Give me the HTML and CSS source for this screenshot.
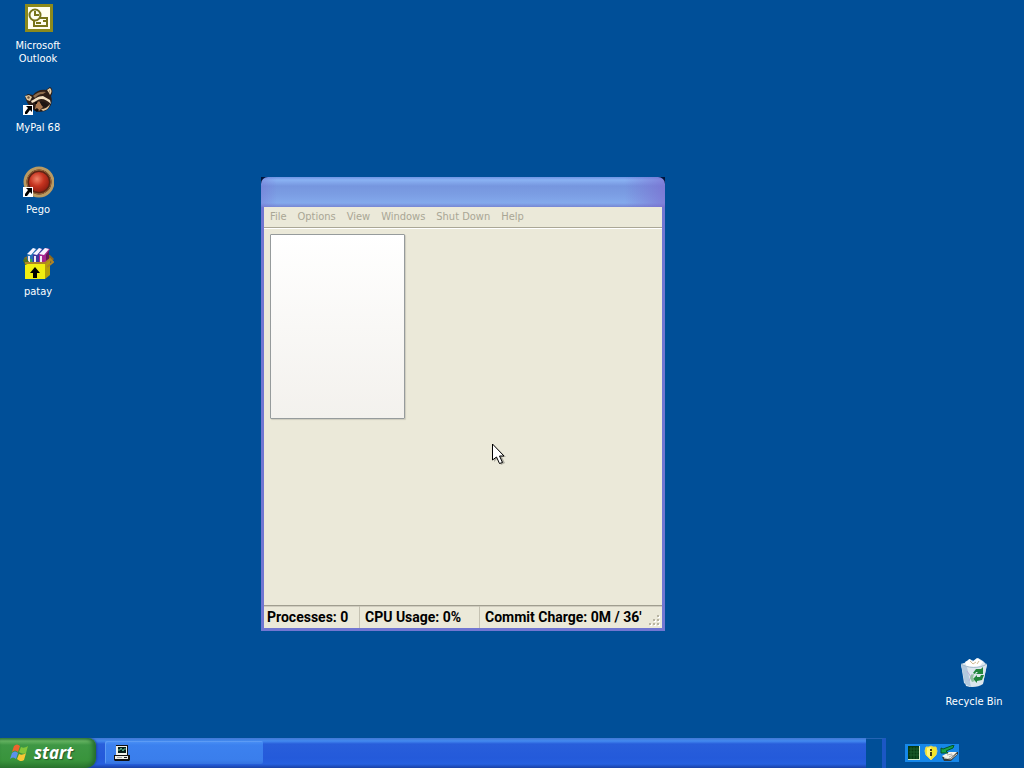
FILE: index.html
```html
<!DOCTYPE html>
<html lang="en">
  <head>
    <meta charset="UTF-8" />
    <title>Desktop</title>
    <link rel="stylesheet" href="styles.css">
  </head>
  <body>
    <main class="desktop">
      <nav class="icons">
        <a class="icon" href="#outlook">
          <svg width="32" height="32" viewBox="0 0 32 32">
            <rect x="3" y="2" width="28" height="28" fill="#fffff0"/>
            <rect x="4.500" y="3.500" width="25" height="25" fill="#fffff0" stroke="#8c8a1c" stroke-width="3"/>
            <rect x="12" y="16" width="13" height="8" fill="#fffff0" stroke="#77751a" stroke-width="2"/>
            <path d="M14 21h5M21 19h3" stroke="#77751a" stroke-width="2"/>
            <circle cx="13" cy="13" r="5.500" fill="#fffff0" stroke="#77751a" stroke-width="2"/>
            <path d="M13 9v4h4" fill="none" stroke="#77751a" stroke-width="2"/>
          </svg>
          <span>Microsoft Outlook</span>
        </a>
        <a class="icon" href="#mypal">
          <svg width="32" height="32" viewBox="0 0 32 32">
            <path d="M3 12l3-2 5 1c3-4 8-6 13-5l4-3c3 2 3 6 1 9 2 6 0 12-6 15-6 2-12 0-14-4-3-2-5-6-6-11z" fill="#2c1e18"/>
            <path d="M3 12l4-1 3 2-2 4-3-1z" fill="#dfc9a0"/>
            <path d="M5 13l2-1 1 2-2 1z" fill="#6e5640"/>
            <path d="M25 6l3-2c2 2 2 4 0 7l-1-2z" fill="#e6cfa8"/>
            <path d="M27 6l1 1v2z" fill="#654832"/>
            <path d="M11 12c4-4 9-5 13-4l-3 2c-4 0-6 2-8 4z" fill="#8c6c4e"/>
            <path d="M9 17c4-2 7-5 12-5l7 4 1 4c-3-3-6-5-10-5-3 0-6 3-9 4z" fill="#f0dfc3"/>
            <path d="M14 20l3-3 4 6-4 4-4-2z" fill="#a9774f"/>
            <path d="M18 18c4-1 7 1 9 4l-3 1-4-1z" fill="#1d1513"/>
            <path d="M19 25c4 0 7-2 9-5-1 4-3 6-7 7z" fill="#e0c59c"/>
            <path d="M12 26l3-2 2 2-2 2z" fill="#120e0d"/>
            <circle cx="14" cy="19" r="1" fill="#000"/>
            <rect x="1" y="21" width="10" height="10" fill="#fff"/>
            <path d="M4 22h6v6l-2-2-3 4H3v-2l3-4z" fill="#000"/>
          </svg>
          <span>MyPal 68</span>
        </a>
        <a class="icon" href="#pego">
          <svg width="32" height="32" viewBox="0 0 32 32">
            <defs>
              <radialGradient id="ball" cx="0.4" cy="0.35" r="0.7">
                <stop offset="0" stop-color="#f08468"/>
                <stop offset="0.5" stop-color="#c63420"/>
                <stop offset="1" stop-color="#8c1c10"/>
              </radialGradient>
            </defs>
            <circle cx="17" cy="16" r="14" fill="#5c2414" stroke="#b99a62" stroke-width="3"/>
            <circle cx="17" cy="16" r="12" fill="none" stroke="#94653a"/>
            <circle cx="17" cy="16" r="10" fill="url(#ball)"/>
            <rect x="1" y="21" width="10" height="10" fill="#fff"/>
            <path d="M4 22h6v6l-2-2-3 4H3v-2l3-4z" fill="#000"/>
          </svg>
          <span>Pego</span>
        </a>
        <a class="icon" href="#patay">
          <svg width="32" height="32" viewBox="0 0 32 32">
            <path d="M2 10l5-3h21l4 4-4 4H5z" fill="#8b681f"/>
            <path d="M5 7l6-7 4 1-4 7v6H5z" fill="#226eb2"/>
            <path d="M11 7l6-7 4 1-4 7v6h-6z" fill="#3c359e"/>
            <path d="M17 7l6-7 5 1-4 7v6h-7z" fill="#a6238f"/>
            <path d="M5 6l6-6 3 1-5 6zM11 6l6-6 3 1-5 6zM17 6l6-6 4 1-5 6z" fill="#f6f3ff"/>
            <path d="M7 8v6M13 8v6M19 8v6" stroke="#f0e8f2" stroke-width="2"/>
            <path d="M9 11v3" stroke="#3aa052" stroke-width="2"/>
            <path d="M24 7l3-4v9l-3 1z" fill="#651756"/>
            <path d="M3 14h20v17H3z" fill="#f2ee10"/>
            <path d="M23 15l5-4v16l-5 4z" fill="#b5a009"/>
            <path d="M1 12l3-2 4 5-5 2z" fill="#52731d"/>
            <path d="M3 15h20l5-4 3 3-6 5" fill="none" stroke="#af8425" stroke-width="2"/>
            <path d="M13 19l5 6h-3v5h-4v-5H8z" fill="#000"/>
          </svg>
          <span>patay</span>
        </a>
      </nav>

      <a class="icon recycle" href="#recycle">
        <svg width="32" height="32" viewBox="0 0 32 32">
          <path d="M3 6l6-2 2-3 5 2 4-3 5 3 4 4-4 18-13 4-6-4z" fill="#dce8f0"/>
          <path d="M3 6l22 3 4-3-4 20c-4 3-11 4-17 2z" fill="#dce6ed"/>
          <path d="M3 6l6 3 4 20-6-3z" fill="#b4c9dd"/>
          <path d="M7 4l5-3 2 3 5-4 6 4-4 5H9z" fill="#fff"/>
          <path d="M12 3l3 3 3-2M21 3l-2 3" fill="none" stroke="#d2bd96"/>
          <path d="M3 6c6 4 18 5 26 0" fill="none" stroke="#9db6ca"/>
          <path d="M9 13l4 6M11 23l3-7" stroke="#b9afd8"/>
          <path d="M15 15l3-4h5l2-2v7h-7l2-2h-2l-1 2zM26 17l-2 5-5 1v2l-4-4 4-4v2h3l1-2z" fill="#21853c"/>
          <path d="M13 17l3-1-1 4 2 3-3 1-2-4z" fill="#8fbf9e"/>
        </svg>
        <span>Recycle Bin</span>
      </a>

      <section class="window" aria-label="Task manager">
        <header class="title-bar"></header>
        <div class="window-body">
          <div class="menu">
            <button type="button" disabled>File</button>
            <button type="button" disabled>Options</button>
            <button type="button" disabled>View</button>
            <button type="button" disabled>Windows</button>
            <button type="button" disabled>Shut Down</button>
            <button type="button" disabled>Help</button>
          </div>
          <div class="content">
            <div class="panel"></div>
          </div>
          <footer class="status">
            <span class="processes">Processes: 0</span>
            <span class="cpu">CPU Usage: 0%</span>
            <span class="commit">Commit Charge: 0M / 36'</span>
            <svg class="grip" width="14" height="14" viewBox="0 0 14 14">
              <path d="M10 2h2v2h-2zM6 6h2v2H6zM10 6h2v2h-2zM2 10h2v2H2zM6 10h2v2H6zM10 10h2v2h-2z" fill="#fff"/>
              <path d="M9 1h2v2H9zM5 5h2v2H5zM9 5h2v2H9zM1 9h2v2H1zM5 9h2v2H5zM9 9h2v2H9z" fill="#b8b4a2"/>
            </svg>
          </footer>
        </div>
      </section>

      <svg class="cursor" width="16" height="24" viewBox="0 0 16 24">
        <path d="M3 3v16l4-4 3 7 4-2-3-6h4z" fill="#000" opacity="0.25"/>
        <path d="M1.500 1v16l4-3 3 6.500 3-1-3-6.500h4.500z" fill="#fff" stroke="#000"/>
      </svg>
    </main>

    <footer class="taskbar">
      <div class="bar">
        <button class="start" type="button">
          <svg width="20" height="20" viewBox="0 0 20 20">
            <path d="M4 3c2-2 4-2 6 0L8 9C6 7 4 7 2 9z" fill="#ed642d"/>
            <path d="M11 4c2 1 4 1 7-1l-2 7c-2 1-4 1-7-1z" fill="#83c63a"/>
            <path d="M2 10c2-2 4-2 6 0l-2 6c-2-2-4-2-6 0z" fill="#5b91ec"/>
            <path d="M9 11c2 1 4 1 7-1l-2 7c-2 2-5 1-7-1z" fill="#f8c735"/>
          </svg>
          <span>start</span>
        </button>
        <button class="task" type="button" aria-label="Task manager">
          <svg width="16" height="16" viewBox="0 0 16 16">
            <path d="M2 0h12v10h2v5l-1 1H1l-1-1v-5h2z" fill="#111"/>
            <path d="M2 1h11v9H2z" fill="#f0f0e8"/>
            <path d="M4 2h8v6H4z" fill="#061c16"/>
            <path d="M4 5h2l1-2 2 3 1-2h2" fill="none" stroke="#63ba93"/>
            <path d="M1 11h13v3H1z" fill="#f0f0e8"/>
            <path d="M3 12h5v1H3z" fill="#aaa"/>
            <path d="M10 12h3v1h-3z" fill="#222"/>
          </svg>
        </button>
      </div>
      <div class="edge"></div>
      <div class="tray">
        <svg width="16" height="16" viewBox="0 0 16 16">
          <path d="M2 1h12v14H2z" fill="#d6edc8"/>
          <path d="M2 1h11v13H2z" fill="#073b12"/>
          <path d="M3 4h10M3 7h10M3 10h10M5 2v12M8 2v12M11 2v12" stroke="#1b5c2a"/>
        </svg>
        <svg width="16" height="16" viewBox="0 0 16 16">
          <path d="M8 1l2 1h3l1 4-1 4-5 5-5-5-1-4 1-4h3z" fill="#f5e62b" stroke="#e3d45c"/>
          <path d="M4 3l4-1v12l-4-4z" fill="#fff679"/>
          <path d="M7 4h2v2H7zM7 7h2v4H7z" fill="#423d16"/>
        </svg>
        <svg width="18" height="16" viewBox="0 0 18 16">
          <path d="M2 12l7-5h9v2l-7 7H4z" fill="#343a3a"/>
          <path d="M2 11l7-4h8l-6 6H5z" fill="#f4f4ea"/>
          <path d="M4 13l7 1 6-5" fill="none" stroke="#d3d3c9"/>
          <path d="M7 10l5-1M9 12l4-2" stroke="#aaa"/>
          <path d="M1 3l2 1 8-3 3-1-1 3-7 3 2 2H1z" fill="#19a449" stroke="#075427"/>
        </svg>
      </div>
    </footer>
  </body>
</html>
```
FILE: styles.css
```css
* {
    box-sizing: border-box;
}

body {
    margin: 0;
    height: 100vh;
    display: flex;
    flex-direction: column;
    overflow: hidden;
    background-color: #004f98;
    font-family: "DejaVu Sans Condensed", "DejaVu Sans", sans-serif;
    font-size: 11px;
}

button {
    margin: 0;
    padding: 0;
    border: none;
    background: none;
    font-family: inherit;
    font-size: inherit;
}

svg {
    display: block;
    flex-shrink: 0;
}

/* desktop */
.desktop {
    flex: 1;
    position: relative;
    min-height: 0;
}

.icons {
    width: 76px;
    padding-top: 2px;
    display: grid;
    grid-auto-rows: 82px;
}

.icon {
    display: flex;
    flex-direction: column;
    align-items: center;
    gap: 5px;
    color: #fff;
    line-height: 13px;
    text-align: center;
    text-decoration: none;
}

.recycle {
    position: absolute;
    right: 12px;
    bottom: 30px;
    width: 76px;
}

/* window */
.window {
    position: absolute;
    left: 261px;
    top: 177px;
    width: 404px;
    height: 454px;
    display: flex;
    flex-direction: column;
    background-color: #00143c;
}

.title-bar {
    height: 30px;
    border-radius: 7px 7px 0 0;
    background: linear-gradient(to right, rgba(118, 113, 211, 0.4), transparent 16px, transparent 90%, rgba(124, 105, 206, 0.65)), linear-gradient(#6e94e4, #8ab2f3 3px, #7696df 9px, #7b9de3 17px, #83a9ec 26px, #7686d3);
}

.window-body {
    flex: 1;
    display: flex;
    flex-direction: column;
    border: solid #7176d2;
    border-width: 0 3px 3px;
    background-color: #ebe9d9;
}

.menu {
    height: 21px;
    padding-left: 6px;
    display: flex;
    gap: 11px;
    border-bottom: 1px solid #aaa796;
}

.menu button {
    height: 18px;
    color: #a9a695;
}

.content {
    flex: 1;
    padding: 5px 6px;
    border-top: 1px solid #fff;
}

.panel {
    width: 135px;
    height: 185px;
    border: 1px solid #969b9c;
    border-radius: 1px;
    background: linear-gradient(#fff, #f3f1ed);
    box-shadow: 1px 1px 1px #cecbbd;
}

.status {
    height: 23px;
    display: flex;
    border-top: 1px solid #a09e90;
    box-shadow: inset 0 1px #d0cdbf;
    color: #000;
    font-family: Roboto, "Liberation Sans", sans-serif;
    font-size: 14px;
    font-weight: bold;
    line-height: 22px;
    white-space: nowrap;
}

.processes {
    width: 95px;
    padding-left: 3px;
}

.cpu {
    width: 120px;
    padding-left: 5px;
    border-left: 1px solid #c5c2b2;
}

.commit {
    flex: 1;
    padding-left: 5px;
    border-left: 1px solid #c5c2b2;
}

.grip {
    align-self: flex-end;
}

.cursor {
    position: absolute;
    left: 491px;
    top: 443px;
}

/* taskbar */
.taskbar {
    height: 30px;
    display: flex;
}

.bar {
    flex: 1;
    display: flex;
    gap: 9px;
    background: linear-gradient(#4178d4, #438af0 3px, #285edb 6px, #245ada 20px, #2660df 26px, #1941a6);
}

.start {
    width: 96px;
    padding: 0 0 0 10px;
    display: flex;
    align-items: center;
    gap: 4px;
    border-radius: 0 8px 10px 0;
    background: linear-gradient(#3c8745, #67b563 3px, #3e9744 7px, #39943c 22px, #2c792f);
    box-shadow: inset -3px 0 4px #246b2d, 1px 0 2px #1e479f;
    color: #fff;
    font-family: "Open Sans", sans-serif;
    font-size: 17px;
    font-style: italic;
    font-weight: bold;
    line-height: 24px;
    text-shadow: 1px 1px 1px #24552a;
}

.task {
    width: 158px;
    height: 23px;
    margin-top: 3px;
    padding-left: 9px;
    border-radius: 2px;
    background: linear-gradient(#4b92f6, #3c81ef 4px, #3a7eec 19px, #3472df);
    box-shadow: inset 1px 1px #5c9bf5;
}

.edge {
    width: 20px;
    border-top: 1px solid #2464b4;
    border-right: 4px solid #1c57c4;
}

.tray {
    width: 54px;
    height: 18px;
    margin: 6px 65px 0 19px;
    padding-left: 1px;
    display: flex;
    align-items: center;
    gap: 1px;
    background-color: #1687e9;
}
```
